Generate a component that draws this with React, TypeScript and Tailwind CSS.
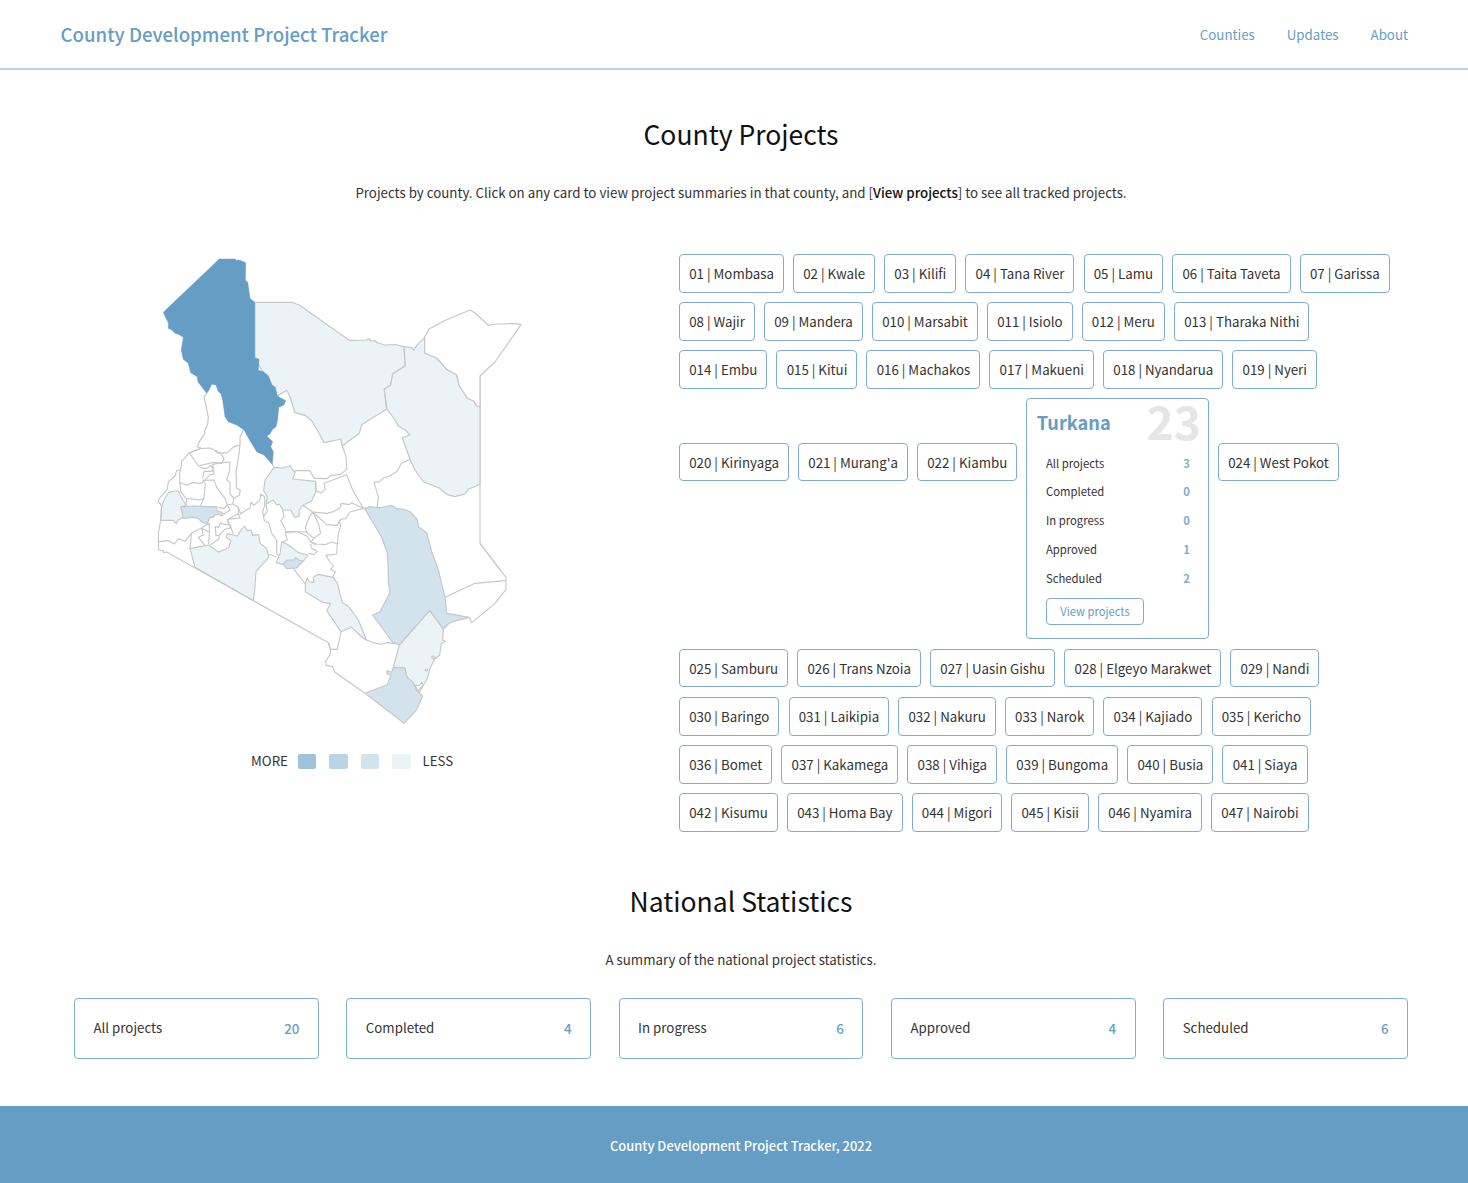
import React from 'react';

const counties = [
  'Mombasa', 'Kwale', 'Kilifi', 'Tana River', 'Lamu', 'Taita Taveta', 'Garissa', 'Wajir', 'Mandera', 'Marsabit',
  'Isiolo', 'Meru', 'Tharaka Nithi', 'Embu', 'Kitui', 'Machakos', 'Makueni', 'Nyandarua', 'Nyeri', 'Kirinyaga',
  "Murang'a", 'Kiambu', 'Turkana', 'West Pokot', 'Samburu', 'Trans Nzoia', 'Uasin Gishu', 'Elgeyo Marakwet',
  'Nandi', 'Baringo', 'Laikipia', 'Nakuru', 'Narok', 'Kajiado', 'Kericho', 'Bomet', 'Kakamega', 'Vihiga',
  'Bungoma', 'Busia', 'Siaya', 'Kisumu', 'Homa Bay', 'Migori', 'Kisii', 'Nyamira', 'Nairobi',
];

const turkanaStats: [string, number][] = [
  ['All projects', 3], ['Completed', 0], ['In progress', 0], ['Approved', 1], ['Scheduled', 2],
];

const nationalStats: [string, number][] = [
  ['All projects', 20], ['Completed', 4], ['In progress', 6], ['Approved', 4], ['Scheduled', 6],
];

const LIGHT = '#ebf3f7';
const MID = '#d3e3ed';

const sheets: { at: string; shapes: [string, string][] }[] = [
  {
    at: 'translate(150 430) scale(.33333)',
    shapes: [
      // western filled counties
      [LIGHT, 'M35 228 45 205 55 188 75 183 85 183 95 205 108 225 93 232 100 262 85 270 78 281 70 271 32 271Z'],
      [MID, 'M93 230 135 228 160 230 200 230 202 242 215 247 218 258 207 254 195 254 190 262 180 262 172 281 155 276 145 265 130 262 100 265Z'],
      [LIGHT, 'M345 150 372 112 400 114 420 107 428 120 436 126 428 147 497 154 497 186 485 213 459 226 447 240 448 258 434 262 422 240 399 240 388 222 380 225 370 210 348 223 352 200 341 182Z'],
      [LIGHT, 'M120 356 175 345 206 366 236 353 243 332 228 322 232 311 250 315 262 318 270 305 284 288 292 302 303 300 308 316 326 314 330 340 350 355 356 382 318 425 314 480 310 512 135 412Z'],
      [LIGHT, 'M395 335 410 342 425 352 445 368 474 375 462 392 440 400 402 404 378 398 390 372Z'],
      [MID, 'M400 402 412 390 432 390 437 383 446 390 460 393 448 405 440 414 410 416Z'],
      [LIGHT, 'M466 460 472 444 478 456 492 458 490 442 505 433 538 440 550 442 562 460 577 518 595 528 625 570 650 631 632 618 605 592 573 605 530 542 542 520 520 518 466 485Z'],
      // lakeside and national boundary
      ['none', 'M163 0 165 10 148 35 142 50 153 55 118 68 95 95 92 120 80 122 75 138 55 155 52 178 28 205 25 215 35 228 32 271 25 310 26 360 40 362 40 368 50 366 535 638 540 658'],
      // Trans Nzoia, Bungoma, Elgeyo Marakwet
      ['none', 'M120 68 150 56 180 54 210 68 222 86 216 100 190 97 145 108 118 68'],
      ['none', 'M195 64 205 70 232 68 252 50 268 46M280 0 270 20 270 44 266 80 258 125 260 175 271 180 268 196 252 205 240 192 240 158 230 148 238 125 240 96 216 98'],
      ['none', 'M216 98 188 103 193 132 180 134 155 160 125 158 112 166 90 158 88 130 92 118M148 112 170 116 182 106 190 118 186 124 162 124 158 145'],
      // Uasin Gishu, Nandi, Kakamega
      ['none', 'M90 158 92 185 108 205 150 210 162 205 166 160M158 151 192 150 200 172 225 205 232 225 222 236 205 232M166 160 158 151M162 205 150 230M110 207 108 225'],
      // Kericho, Nakuru, Baringo
      ['none', 'M232 225 248 222 252 205M232 225 240 240 222 252 215 248M248 222 264 230 272 252 285 242 300 234 303 216 312 226 330 208 332 192 344 200 344 226 338 245 343 272 356 278 365 310 380 330 380 372 386 375'],
      ['none', 'M264 230 266 250 238 266 232 272 238 285 210 280 206 292 196 290 198 318 208 315 206 328 180 345M264 250 270 264 232 268 250 312M240 285 244 292 222 300 208 316'],
      // Homa Bay, Migori, Kisii, Nyamira
      ['none', 'M26 335 56 332 72 342 86 326 105 334 124 310 150 296 178 280M124 310 120 356M178 280 178 310 176 342M176 305 155 295 160 315 145 322 165 346'],
      ['none', 'M356 372 378 380M430 415 466 462'],
      // central highlands
      ['none', 'M436 122 480 122 492 145 510 145 530 146 545 136 570 134 590 118 588 80 576 45'],
      ['none', 'M497 154 498 184 515 188 526 178 522 160 590 134 608 180 640 235'],
      ['none', 'M459 226 488 246 530 250 552 244 570 234 574 220 598 224 605 218 640 235 600 246 586 266 572 268 562 286 530 284 488 246'],
      ['none', 'M398 240 402 262 392 272 403 292 408 305 470 306 466 292 478 262 488 246M488 246 505 280 512 310 492 325 468 306'],
      ['none', 'M405 305 412 330 395 338M408 308 440 304 470 318 482 336 498 345M482 336 492 325M482 336 500 342 525 344 545 336 562 342 560 372 528 376 536 390 550 408 542 418 556 425 548 442'],
      ['none', 'M568 270 572 290 565 310 562 342M482 342 484 354 502 364 492 374 476 370'],
      ['none', 'M348 224 352 245 340 260M640 235 690 232'],
    ],
  },
  {
    at: 'translate(310 560) scale(.33333)',
    shapes: [
      [LIGHT, 'M359 151 400 207 398 240 406 244 394 250 389 285 374 298 360 325 352 355 328 398 318 378 300 365 288 345 285 324 250 322 268 255Z'],
      [MID, 'M250 322 285 324 290 350 310 368 322 395 338 408 318 452 282 490 250 465 165 400 232 374 243 345 231 342 231 332 245 337Z'],
      ['#fff', 'M315 378 330 375 335 367 339 376 324 392Z'],
      ['none', 'M365 292a5 4 0 1 0 10 0 5 4 0 1 0-10 0M345 330a4 3 0 1 0 8 0 4 3 0 1 0-8 0'],
      ['none', 'M510-50 588 52 588 88 555 130 485 188 478 172M588 62 495 70 405 112'],
      ['none', 'M93 215 88 240 82 268 62 268 60 285 46 305 50 316 68 320 73 335 165 400M56 248 62 268M170 240 190 248 215 253 230 248 248 250 268 252'],
    ],
  },
  {
    at: 'translate(360 420) scale(.33333)',
    shapes: [
      ['none', 'M150 118 125 130 110 155 88 168 70 175 60 184 42 187 55 230 52 262'],
      ['none', 'M360-132 360 370 420 450'],
    ],
  },
];

const large: [string, string][] = [
  [LIGHT, 'M254.7 302.3H291.7L299.7 305.3 330 326.7 349.3 340.3 366.7 340 369 338.7 371 341 375 340.5 377 342.5 385 345 395 344.5 404 346.7 405.3 365.7 392.7 374 390.7 385 384.3 389.3 386.5 409.3 361.7 424.7 359.3 433.3 342.3 446 340.7 439 337 440 324 442.7 318.3 431.7 311.7 420.7 305 415.3 295 412.7 290 396.7 286.7 390.3 277.3 396 254.7 358Z'],
  [LIGHT, 'M404 346.7 411.7 347.7 414 350.3 416.7 345.3 424.7 337.3V353L436.7 358 446.7 369.3 456.7 374.7 459 385 467.3 398.3 473.3 400.7 476.7 405.7 480 406.7V484L474 487 468.3 489 465 494 455 496.7 447.3 494.7 439.3 488 423.3 481.7 415 470 410 459.3 402.3 437.7 410 435 405 430 398.3 426 395 420 387 409.3 384.3 389.3 390.7 385 392.7 374 405.3 365.7Z'],
  ['#fff', 'M424.7 337.3 429 329 443.3 321.3 470 310 475 313 488.3 325.3 496 324 505 324 513.3 323.3 521 324.7 495 362 480 376V406.7L476.7 405.7 473.3 400.7 467.3 398.3 459 385 456.7 374.7 446.7 369.3 436.7 358 424.7 353Z'],
  [MID, 'M365 509.3 370 506.5 378.3 508 391.7 505.3 396.7 508.7 403 509 410 511.7 417.3 519.3 418.3 526.7 426.7 532.7 431.7 551.7 438.3 570 445 597.3 446.7 613.3 458 615.3 469.3 617.3 456.7 620.7 450 622.5 443.3 629 429.7 610.3 399.3 645 392.7 642.3 372.7 615 380 611.7 390 592.7 388.3 581.7V570L387.3 552.7 381.7 537.3Z'],
];

const turkana =
  'M219.3 259H235.3L236 260.5 239 260 245.7 262.7 245.3 280 247.7 282.3 250 298.3 254.7 302.3V357.7L259 359.3 258.3 370.3 263 371.5 268.3 375.7 272 385 275.3 387.3 277.3 396 285.7 400.7 284 405 278.7 407.3 277.5 420 276 426.7 272 430 270 434 266.7 436 272.7 441.7 270.7 446.7 273.3 451.7 272.3 464.5 264 455 256.7 451.7 250 440.7 244 430 236.7 425 228.3 421.7 225 416.7 222.7 400 221 394 218 391 216 385 211.7 384.3 209 390 206.7 393.3 201.7 386.7 198 382 197.3 376.7 190.7 372.7 188.3 363.3 183.3 359.3 181.3 350 183.3 337.3 179 334.5 175 333.3 172 330 168.3 328.3 168.5 323 166 318.3 163.3 312.3Z';

function KenyaMap() {
  return (
    <svg className="h-[480px] w-[380px]" viewBox="150 250 380 480" stroke="#c5c7c9" strokeWidth="1.2" strokeLinejoin="round">
      {sheets.map((s) => (
        <g key={s.at} transform={s.at} strokeWidth="3.4">
          {s.shapes.map(([fill, d]) => <path key={d} d={d} fill={fill} />)}
        </g>
      ))}
      {large.map(([fill, d]) => <path key={d} d={d} fill={fill} />)}
      <path d="M206.7 393.3 204 396.7 208.3 417 207.7 424 204.5 431" fill="none" />
      <path d="M272.3 464.5 274.3 467.5" fill="none" />
      <path d={turkana} fill="#659dc4" stroke="#659dc4" strokeWidth=".5" />
    </svg>
  );
}

function TurkanaCard() {
  return (
    <article className="relative h-[240.8px] w-[182.5px] rounded-[4px] border border-[#7faecb] pl-[18.6px] pr-[18px] pt-[49.3px]">
      <h3 className="absolute left-[9.5px] top-[7.3px] text-[18.2px] leading-[30px] font-bold text-[#659dc4]">Turkana</h3>
      <span className="absolute right-[7px] top-[-4px] text-[46px] leading-[50px] font-bold text-[#e5e5e5]">23</span>
      {turkanaStats.map(([label, n]) => (
        <div key={label} className="flex h-[28.75px] items-center justify-between text-[11.3px]">
          <span>{label}</span>
          <b className="font-bold text-[#7faecb]">{n}</b>
        </div>
      ))}
      <button className="mt-[6px] block h-[27px] w-[98px] rounded-[4px] border border-[#7faecb] text-[11.2px] leading-[25px] text-[#659dc4]">
        View projects
      </button>
    </article>
  );
}

export default function App() {
  return (
    <div className="h-[1183px] w-[1468px] overflow-hidden bg-white font-['Noto_Sans_CJK_SC',sans-serif] text-[13.3px] text-[#333]">
      <header className="flex h-[70px] items-center justify-between border-b-2 border-[#bdd3e3] pl-[60.5px] pr-[60px] text-[#659dc4]">
        <h1 className="text-[18.65px] font-medium whitespace-nowrap">County Development Project Tracker</h1>
        <nav className="flex gap-[32px] pt-[2px]">
          <a>Counties</a>
          <a>Updates</a>
          <a>About</a>
        </nav>
      </header>

      <main className="h-[1036px] pl-[74px] pr-[60px]">
        <h2 className="pt-[43px] text-center text-[26.5px] leading-[42px] text-[#111]">County Projects</h2>
        <p className="mt-[28px] text-center leading-[20px]">
          Projects by county. Click on any card to view project summaries in that county, and [
          <b className="font-medium text-[#111]">View projects</b>] to see all tracked projects.
        </p>

        <section className="mt-[47px] flex h-[618px]">
          <div className="w-[605px] pl-[76px]">
            <KenyaMap />
            <div className="ml-[101px] mt-[21px] flex h-[20px] items-center gap-[13px]">
              <span className="-mr-[3px]">MORE</span>
              <i className="h-[15px] w-[18.5px] rounded-[2px] bg-[#9fc4da]" />
              <i className="h-[15px] w-[18.5px] rounded-[2px] bg-[#b9d4e4]" />
              <i className="h-[15px] w-[18.5px] rounded-[2px] bg-[#d3e3ed]" />
              <i className="h-[15px] w-[18.5px] rounded-[2px] bg-[#ebf3f7]" />
              <span className="-ml-[1.5px]">LESS</span>
            </div>
          </div>
          <div className="mt-[4px] flex w-[722px] flex-wrap content-start items-baseline gap-x-[9.1px] gap-y-[9.65px]">
            {counties.map((name, i) =>
              name === 'Turkana' ? (
                <TurkanaCard key={name} />
              ) : (
                <div key={name} className="flex h-[38.5px] items-center whitespace-nowrap rounded-[4px] border border-[#7faecb] pl-[9.2px] pr-[9px] pt-[1.3px]">
                  0{i + 1} | {name}
                </div>
              ),
            )}
          </div>
        </section>

        <h2 className="pt-[12px] text-center text-[26.5px] leading-[42px] text-[#111]">National Statistics</h2>
        <p className="mt-[28px] text-center leading-[20px]">A summary of the national project statistics.</p>
        <section className="mt-[28px] grid grid-cols-5 gap-[27.5px]">
          {nationalStats.map(([label, n]) => (
            <div key={label} className="flex h-[61.4px] items-center justify-between rounded-[4px] border border-[#7faecb] px-[18.5px]">
              <span className="-mt-[2.4px]">{label}</span>
              <b className="pt-[.6px] font-medium text-[#659dc4]">{n}</b>
            </div>
          ))}
        </section>
      </main>

      <footer className="flex h-[77px] items-center justify-center bg-[#659dc4] pl-[14px] pt-[3px] text-[12.95px] font-medium text-white">
        County Development Project Tracker, 2022
      </footer>
    </div>
  );
}
